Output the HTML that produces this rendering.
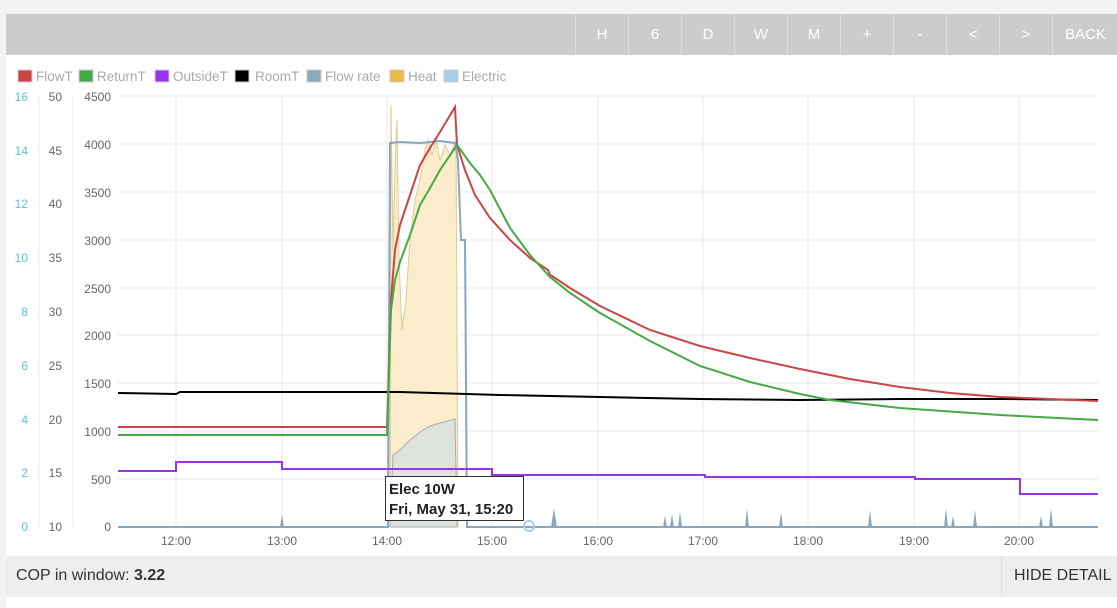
<!DOCTYPE html>
<html><head><meta charset="utf-8"><style>
body{margin:0;width:1117px;height:608px;background:#f3f3f3;font-family:"Liberation Sans",sans-serif;position:relative;overflow:hidden}
.top{position:absolute;left:6px;top:14px;width:1111px;height:41px;background:#ccc}
.btn{position:absolute;top:0;height:41px;width:52px;border-left:1px solid #ddd;color:#fff;font-size:15px;line-height:41px;text-align:center}
.panel{position:absolute;left:6px;top:55px;width:1111px;height:501px;background:#fff}
.bot{position:absolute;left:6px;top:556px;width:1111px;height:41px;background:#eee;font-size:16px;color:#333;line-height:40px}
.bw{position:absolute;left:6px;top:597px;width:1111px;height:11px;background:#fff}
svg text{font-family:"Liberation Sans",sans-serif}
</style></head><body>
<div class="top">
<div class="btn" style="left:569px">H</div><div class="btn" style="left:622px">6</div><div class="btn" style="left:675px">D</div><div class="btn" style="left:728px">W</div><div class="btn" style="left:781px">M</div><div class="btn" style="left:834px">+</div><div class="btn" style="left:887px">-</div><div class="btn" style="left:940px">&lt;</div><div class="btn" style="left:993px">&gt;</div><div class="btn" style="left:1046px;width:65px">BACK</div>
</div>
<div class="panel"></div>
<svg style="position:absolute;left:0;top:0" width="1117" height="608">
<g font-size="13.5" fill="#aaa">
<rect x="18" y="70" width="14" height="12" fill="#c44" stroke="#ccc"/><text x="36" y="81">FlowT</text>
<rect x="79" y="70" width="14" height="12" fill="#4a4" stroke="#ccc"/><text x="97" y="81">ReturnT</text>
<rect x="155" y="70" width="14" height="12" fill="#93e" stroke="#ccc"/><text x="173" y="81">OutsideT</text>
<rect x="235" y="70" width="14" height="12" fill="#000" stroke="#ccc"/><text x="255" y="81">RoomT</text>
<rect x="307" y="70" width="14" height="12" fill="#8ab" stroke="#ccc"/><text x="325" y="81">Flow rate</text>
<rect x="390" y="70" width="14" height="12" fill="#eb4" stroke="#ccc"/><text x="408" y="81">Heat</text>
<rect x="444" y="70" width="14" height="12" fill="#ace" stroke="#ccc"/><text x="462" y="81">Electric</text>
</g>
<g stroke="#e8e8e8" stroke-width="1">
<line x1="118" y1="96" x2="1098" y2="96"/><line x1="118" y1="144" x2="1098" y2="144"/><line x1="118" y1="192" x2="1098" y2="192"/><line x1="118" y1="240" x2="1098" y2="240"/><line x1="118" y1="288" x2="1098" y2="288"/><line x1="118" y1="335" x2="1098" y2="335"/><line x1="118" y1="383" x2="1098" y2="383"/><line x1="118" y1="431" x2="1098" y2="431"/><line x1="118" y1="479" x2="1098" y2="479"/>
<line x1="176" y1="96" x2="176" y2="527"/><line x1="282" y1="96" x2="282" y2="527"/><line x1="387" y1="96" x2="387" y2="527"/><line x1="492" y1="96" x2="492" y2="527"/><line x1="598" y1="96" x2="598" y2="527"/><line x1="703" y1="96" x2="703" y2="527"/><line x1="808" y1="96" x2="808" y2="527"/><line x1="914" y1="96" x2="914" y2="527"/><line x1="1019" y1="96" x2="1019" y2="527"/>
<line x1="39" y1="96" x2="39" y2="527"/><line x1="73" y1="96" x2="73" y2="527"/>
</g>
<g font-size="12" fill="#5bc0de" text-anchor="end">
<text x="28" y="101">16</text><text x="28" y="155">14</text><text x="28" y="208">12</text><text x="28" y="262">10</text><text x="28" y="316">8</text><text x="28" y="370">6</text><text x="28" y="424">4</text><text x="28" y="477">2</text><text x="28" y="531">0</text></g>
<g font-size="12" fill="#666" text-anchor="end">
<text x="62" y="101">50</text><text x="62" y="155">45</text><text x="62" y="208">40</text><text x="62" y="262">35</text><text x="62" y="316">30</text><text x="62" y="370">25</text><text x="62" y="424">20</text><text x="62" y="477">15</text><text x="62" y="531">10</text>
<text x="111" y="101">4500</text><text x="111" y="149">4000</text><text x="111" y="197">3500</text><text x="111" y="245">3000</text><text x="111" y="293">2500</text><text x="111" y="340">2000</text><text x="111" y="388">1500</text><text x="111" y="436">1000</text><text x="111" y="484">500</text><text x="111" y="531">0</text>
</g>
<g font-size="12" fill="#666" text-anchor="middle">
<text x="176" y="545">12:00</text><text x="282" y="545">13:00</text><text x="387" y="545">14:00</text><text x="492" y="545">15:00</text><text x="598" y="545">16:00</text><text x="703" y="545">17:00</text><text x="808" y="545">18:00</text><text x="914" y="545">19:00</text><text x="1019" y="545">20:00</text>
</g>
<polygon points="390,527 391,105 393,250 395,170 397,120 399,260 402,330 406,300 410,240 415,200 420,180 425,150 428,140 432,155 436,140 440,160 445,145 450,155 456,140 458,527" fill="#fbeccb" stroke="#dccb95" stroke-width="1"/>
<polygon points="390,527 393,455 400,450 410,440 420,432 430,426 440,423 455,419 457,527" fill="#dfe3de" stroke="#aab"/>
<g fill="#8aa6bd"><polygon points="280,527 282,514 284,527"/><polygon points="551,527 554,508 557,527"/><polygon points="663,527 665,516 667,527"/><polygon points="670,527 672,514 674,527"/><polygon points="678,527 680,512 682,527"/><polygon points="745,527 747,508 749,527"/><polygon points="779,527 781,512 783,527"/><polygon points="868,527 870,510 872,527"/><polygon points="944,527 946,508 948,527"/><polygon points="951,527 953,516 955,527"/><polygon points="973,527 975,510 977,527"/><polygon points="1039,527 1041,516 1043,527"/><polygon points="1049,527 1051,508 1053,527"/></g>
<polyline points="118,527 388,527 390,143 400,142 420,143 440,141 455,143 458,160 461,240 465,240 467,527 1098,527" fill="none" stroke="#8aa6bd" stroke-width="2"/>
<polyline points="118,393 176,394 180,392 400,392 500,395 600,397 700,399 800,400 900,399 1000,399 1098,400" fill="none" stroke="#000" stroke-width="2"/>
<polyline points="118,427 387,427 391,300 395,250 400,225 410,195 420,165 430,148 440,132 455,107 457,145 465,170 475,195 490,218 510,240 530,258 548,270 550,275 552,276 570,288 600,306 650,330 700,346 750,358 800,369 850,379 900,387 950,393 1000,397 1050,399 1098,401" fill="none" stroke="#c44" stroke-width="2"/>
<polyline points="118,435 387,435 391,310 395,280 400,262 410,235 420,205 430,188 440,170 457,145 470,163 480,175 490,190 510,228 530,255 550,277 570,293 600,313 650,341 700,366 750,382 800,394 830,400 900,408 1000,415 1098,420" fill="none" stroke="#4a4" stroke-width="2"/>
<polyline points="118,471 176,471 176,462 282,462 282,469 492,469 492,475 705,475 705,477 915,477 915,479 1020,479 1020,494 1098,494" fill="none" stroke="#93e" stroke-width="2"/>
<circle cx="529" cy="526" r="5" fill="none" stroke="#ace" stroke-width="2"/>
<rect x="385.5" y="476.5" width="138" height="44" fill="#fff" stroke="#333"/>
<text x="389" y="494" font-size="15" font-weight="bold" fill="#222">Elec 10W</text>
<text x="389" y="514" font-size="15" font-weight="bold" fill="#222">Fri, May 31, 15:20</text>
</svg>
<div class="bot"><span style="margin-left:10px">COP in window: <b>3.22</b></span><span style="position:absolute;left:995px;top:0;height:41px;border-left:1px solid #ddd;padding-left:12px">HIDE DETAIL</span></div>
<div class="bw"></div>
</body></html>
